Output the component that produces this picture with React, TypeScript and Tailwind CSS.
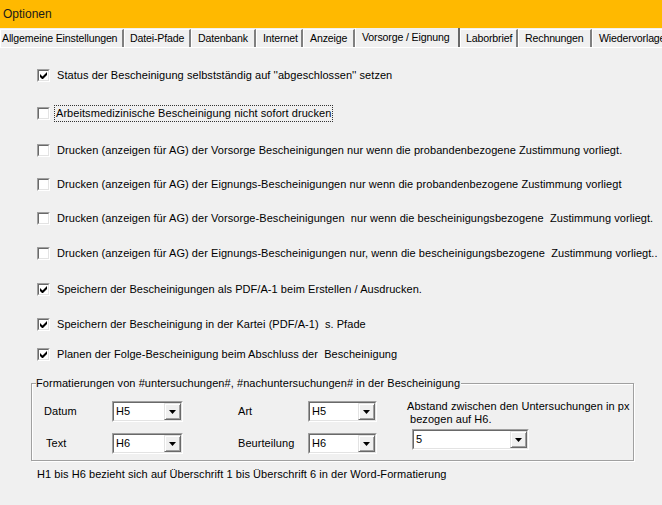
import React from "react";

const tabs = [
  { label: "Allgemeine Einstellungen", w: "w-[124px]", pl: "pl-[1px]" },
  { label: "Datei-Pfade", w: "w-[67px]", pl: "pl-[5px]" },
  { label: "Datenbank", w: "w-[65px]", pl: "pl-[6px]" },
  { label: "Internet", w: "w-[47px]", pl: "pl-[6px]" },
  { label: "Anzeige", w: "w-[52px]", pl: "pl-[6px]" },
  { label: "Vorsorge / Eignung", w: "w-[105px]", pl: "pl-[6px]", active: true },
  { label: "Laborbrief", w: "w-[58px]", pl: "pl-[5px]" },
  { label: "Rechnungen", w: "w-[74px]", pl: "pl-[6px]" },
  { label: "Wiedervorlage", w: "w-[80px]", pl: "pl-[6px]" },
];

const rows = [
  { text: "Status der Bescheinigung selbstständig auf ''abgeschlossen'' setzen", checked: true, mt: "mt-0" },
  { text: "Arbeitsmedizinische Bescheinigung nicht sofort drucken", checked: false, mt: "mt-[25px]", focus: true },
  { text: "Drucken (anzeigen für AG) der Vorsorge Bescheinigungen nur wenn die probandenbezogene Zustimmung vorliegt.", checked: false, mt: "mt-[24px]" },
  { text: "Drucken (anzeigen für AG) der Eignungs-Bescheinigungen nur wenn die probandenbezogene Zustimmung vorliegt", checked: false, mt: "mt-[21px]" },
  { text: "Drucken (anzeigen für AG) der Vorsorge-Bescheinigungen  nur wenn die bescheinigungsbezogene  Zustimmung vorliegt.", checked: false, mt: "mt-[21px]" },
  { text: "Drucken (anzeigen für AG) der Eignungs-Bescheinigungen nur, wenn die bescheinigungsbezogene  Zustimmung vorliegt..", checked: false, mt: "mt-[22px]" },
  { text: "Speichern der Bescheinigungen als PDF/A-1 beim Erstellen / Ausdrucken.", checked: true, mt: "mt-[23px]" },
  { text: "Speichern der Bescheinigung in der Kartei (PDF/A-1)  s. Pfade", checked: true, mt: "mt-[22px]" },
  { text: "Planen der Folge-Bescheinigung beim Abschluss der  Bescheinigung", checked: true, mt: "mt-[17px]" },
];

function CheckBox({ checked }: { checked: boolean }) {
  return (
    <span className="flex h-[13px] w-[13px] shrink-0 items-center justify-center border border-t-[#a0a0a0] border-l-[#a0a0a0] border-b-white border-r-white">
      <span className="flex h-[11px] w-[11px] items-center justify-center border border-t-[#696969] border-l-[#696969] border-b-[#e3e3e3] border-r-[#e3e3e3] bg-white">
        {checked && (
          <svg width="7" height="7" viewBox="0 0 7 7">
            <path d="M0 2v3l2 2h1l4-4V0L2.5 4.5z" fill="#000" />
          </svg>
        )}
      </span>
    </span>
  );
}

function Combo({ value, w }: { value: string; w: string }) {
  return (
    <div className={`${w} flex h-[21px] border border-t-[#a0a0a0] border-l-[#a0a0a0] border-b-white border-r-white`}>
      <div className="flex flex-1 border border-t-[#696969] border-l-[#696969] border-b-[#e3e3e3] border-r-[#e3e3e3] bg-white">
        <span className="flex-1 pl-[2px] leading-[17px]">{value}</span>
        <span className="flex w-[17px] items-center justify-center border border-t-[#e3e3e3] border-l-[#e3e3e3] border-b-[#696969] border-r-[#696969] bg-[#f0f0f0] shadow-[inset_1px_1px_0_#fff,inset_-1px_-1px_0_#a0a0a0]">
          <svg width="7" height="4" viewBox="0 0 7 4">
            <path d="M0 0h7L3.5 4z" fill="#000" />
          </svg>
        </span>
      </div>
    </div>
  );
}

export default function App() {
  return (
    <div className="h-[505px] w-[662px] overflow-hidden bg-[#f0f0f0] text-[11px] tracking-[0.06px] text-black [font-family:'Liberation_Sans',Arial,sans-serif]">
      <div className="flex h-[28px] items-center bg-[#ffb900] pl-[3px] text-[12px] tracking-normal text-[#1a1a1a]">
        Optionen
      </div>

      <div className="flex h-[20px] items-end overflow-hidden whitespace-nowrap border-b border-white text-[10.6px] tracking-[-0.15px]">
        {tabs.map((t) =>
          t.active ? (
            <div
              key={t.label}
              className={`${t.w} ${t.pl} -mb-px flex h-[21px] shrink-0 items-start overflow-hidden border-l border-white border-r-2 border-r-[#696969] bg-[#f0f0f0] pt-[3px]`}
            >
              {t.label}
            </div>
          ) : (
            <div
              key={t.label}
              className={`${t.w} ${t.pl} flex h-[18px] shrink-0 items-center overflow-hidden border-t border-white border-l border-r-2 border-r-[#808080]`}
            >
              {t.label}
            </div>
          )
        )}
      </div>

      <div className="flex flex-col pl-[37px] pt-[21px]">
        {rows.map((r) => (
          <div key={r.text} className={`${r.mt} flex h-[13px] items-center whitespace-pre`}>
            <CheckBox checked={r.checked} />
            {r.focus ? (
              <span className="ml-[4px] border border-dotted border-[#333] px-px leading-[15px]">{r.text}</span>
            ) : (
              <span className="ml-[7px]">{r.text}</span>
            )}
          </div>
        ))}
      </div>

      <div className="relative ml-[31px] mt-[22px] h-[78px] w-[603px] border border-[#a0a0a0] shadow-[inset_1px_1px_0_#fff,1px_1px_0_#fff]">
        <span className="absolute -top-[8px] left-[4px] bg-[#f0f0f0] pr-[1px] leading-[14px]">
          Formatierungen von #untersuchungen#, #nachuntersuchungen# in der Bescheinigung
        </span>
        <div className="flex pt-[17px]">
          <div className="flex flex-col gap-[11px]">
            <div className="flex items-center">
              <span className="w-[80px] pl-[12px]">Datum</span>
              <Combo value="H5" w="w-[71px]" />
            </div>
            <div className="flex items-center">
              <span className="w-[80px] pl-[14px]">Text</span>
              <Combo value="H6" w="w-[71px]" />
            </div>
          </div>
          <div className="ml-[55px] flex flex-col gap-[11px]">
            <div className="flex items-center">
              <span className="w-[70px]">Art</span>
              <Combo value="H5" w="w-[69px]" />
            </div>
            <div className="flex items-center">
              <span className="w-[70px]">Beurteilung</span>
              <Combo value="H6" w="w-[69px]" />
            </div>
          </div>
          <div className="-mt-[1px] ml-[30px] flex flex-col">
            <span className="leading-[13px]">Abstand zwischen den Untersuchungen in px</span>
            <span className="pl-[3px] leading-[13px]">bezogen auf H6.</span>
            <div className="ml-[5px] mt-[3px]">
              <Combo value="5" w="w-[117px]" />
            </div>
          </div>
        </div>
      </div>

      <div className="ml-[37px] mt-[5px]">H1 bis H6 bezieht sich auf Überschrift 1 bis Überschrift 6 in der Word-Formatierung</div>
    </div>
  );
}
